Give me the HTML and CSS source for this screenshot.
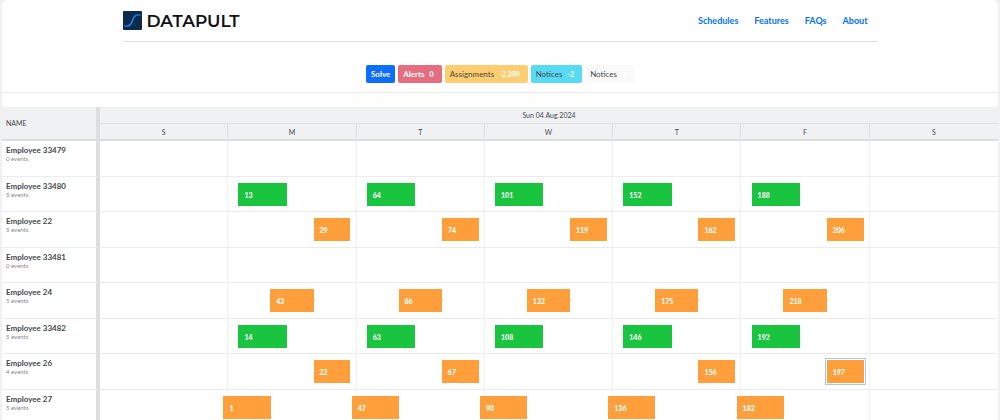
FILE: index.html
```html
<!DOCTYPE html>
<html lang="en">
<head>
<meta charset="utf-8">
<title>Datapult</title>
<link rel="stylesheet" href="styles.css">
</head>
<body>
<div class="page">
  <header class="site-header">
    <a class="brand" href="#">
      <svg class="brand-mark" viewBox="0 0 19 19" aria-hidden="true">
        <rect width="19" height="19" rx="1" fill="#0b2a4c"/>
        <path d="M1.500 14.800C6 16 8 13.800 9.200 10C10.400 5.800 12 3.600 17.500 4" fill="none" stroke="#1583e6" stroke-width="1.200" stroke-linecap="round"/>
        <path d="M5 15.200C7.400 14.400 8.600 12.400 9.400 9.800C10.100 7.200 11 5.400 12.800 4.300" fill="none" stroke="#1c7fe6" stroke-width="1.300"/>
        <circle cx="12.500" cy="14.500" r=".4" fill="#2b5f96"/>
        <circle cx="6" cy="5" r=".3" fill="#2b5f96"/>
      </svg>
      <span class="brand-name">DATAPULT</span>
    </a>
    <nav class="site-nav">
      <a href="#">Schedules</a>
      <a href="#">Features</a>
      <a href="#">FAQs</a>
      <a href="#">About</a>
    </nav>
  </header>

  <div class="toolbar">
    <button class="btn solve">Solve</button>
    <button class="btn alerts">Alerts <span class="count">0</span></button>
    <button class="btn assignments">Assignments <span class="count">-2.390</span></button>
    <button class="btn info">Notices <span class="count">-2</span></button>
    <button class="btn light">Notices <span class="count">0</span></button>
  </div>

  <table class="scheduler">
    <thead>
      <tr class="date-row"><th class="name-head" rowspan="2">NAME</th><th colspan="7">Sun 04 Aug 2024</th></tr>
      <tr class="day-row"><th>S</th><th>M</th><th>T</th><th>W</th><th>T</th><th>F</th><th>S</th></tr>
    </thead>
    <tbody>
      <tr><th>Employee 33479<small>0 events</small></th><td></td><td></td><td></td><td></td><td></td><td></td><td></td></tr>
      <tr><th>Employee 33480<small>5 events</small></th><td></td><td><div class="event early">13</div></td><td><div class="event early">64</div></td><td><div class="event early">101</div></td><td><div class="event early">152</div></td><td><div class="event early">188</div></td><td></td></tr>
      <tr><th>Employee 22<small>5 events</small></th><td></td><td><div class="event late">29</div></td><td><div class="event late">74</div></td><td><div class="event late">119</div></td><td><div class="event late">162</div></td><td><div class="event late">206</div></td><td></td></tr>
      <tr><th>Employee 33481<small>0 events</small></th><td></td><td></td><td></td><td></td><td></td><td></td><td></td></tr>
      <tr><th>Employee 24<small>5 events</small></th><td></td><td><div class="event day">43</div></td><td><div class="event day">86</div></td><td><div class="event day">132</div></td><td><div class="event day">175</div></td><td><div class="event day">218</div></td><td></td></tr>
      <tr><th>Employee 33482<small>5 events</small></th><td></td><td><div class="event early">14</div></td><td><div class="event early">63</div></td><td><div class="event early">108</div></td><td><div class="event early">146</div></td><td><div class="event early">192</div></td><td></td></tr>
      <tr><th>Employee 26<small>4 events</small></th><td></td><td><div class="event late">22</div></td><td><div class="event late">67</div></td><td></td><td><div class="event late">156</div></td><td><div class="event late selected">197</div></td><td></td></tr>
      <tr><th>Employee 27<small>5 events</small></th><td><div class="event night">1</div></td><td><div class="event night">47</div></td><td><div class="event night">90</div></td><td><div class="event night">136</div></td><td><div class="event night">182</div></td><td></td><td></td></tr>
    </tbody>
  </table>
</div>
</body>
</html>
```
FILE: styles.css
```css
* { box-sizing: border-box; }

body {
  margin: 0;
  height: 100vh;
  overflow: hidden;
  background: #f1f1f2;
  color: #44484c;
  font-family: "Gill Sans", Lato, "Open Sans", sans-serif;
}

.page {
  margin: 0 2px;
  min-height: 100vh;
  background: #fff;
  border-radius: 5px 5px 0 0;
}

.site-header {
  display: flex;
  align-items: center;
  justify-content: space-between;
  max-width: 755px;
  height: 42px;
  margin: 0 auto;
  padding-right: 10px;
  border-bottom: 1px solid #dfe0e2;
}

.brand {
  display: flex;
  align-items: center;
  gap: 5px;
  color: #101214;
  text-decoration: none;
}

.brand-mark { width: 19px; height: 19px; }

.brand-name {
  font-family: Montserrat, Lato, sans-serif;
  font-size: 17px;
  font-weight: 600;
  line-height: 20px;
}

.site-nav { display: flex; gap: 16px; }

.site-nav a {
  color: #0070ff;
  font-size: 9px;
  font-weight: 700;
  line-height: 12px;
  text-decoration: none;
}

.toolbar {
  display: flex;
  justify-content: center;
  gap: 3px;
  padding: 23px 0 9px;
  border-bottom: 1px solid #e8e9ea;
}

.btn {
  display: flex;
  align-items: center;
  gap: 5px;
  height: 18px;
  padding: 0 5px;
  border: 0;
  border-radius: 2px;
  color: #44484c;
  font-family: inherit;
  font-size: 8px;
  white-space: nowrap;
}

.count {
  padding-right: 3px;
  color: #fff;
  font-size: 7px;
  font-weight: 900;
}

.solve { background: #0d6efd; color: #fff; font-weight: 700; }
.alerts { background: #e66d80; color: #fff; font-weight: 700; }
.assignments { background: #ffcd70; }
.info { background: #57daf3; }
.light { background: #fafafa; }

.scheduler {
  width: 100%;
  margin-top: 14px;
  table-layout: fixed;
  border-collapse: separate;
  border-spacing: 0;
}

.scheduler th, .scheduler td { padding: 0; }

.scheduler thead th {
  background: #f0f1f3;
  color: #44484e;
  font-size: 7px;
  font-weight: 400;
  line-height: 10px;
}

.date-row { height: 17px; }
.day-row { height: 17px; }

.date-row th { border-bottom: 1px solid #dedfe2; }

.scheduler .name-head {
  width: 98px;
  padding-left: 4px;
  border-right: 4px solid #dedee1;
  border-bottom: 2px solid #dcdde0;
  text-align: left;
}

.day-row th {
  border-right: 1px solid #dcdde0;
  border-bottom: 2px solid #dcdde0;
}

.scheduler tbody tr { height: 36px; }
.scheduler tbody tr:nth-child(even) { height: 35px; }

.scheduler tbody th {
  padding: 4px 0 0 4px;
  border-right: 4px solid #dedee1;
  border-bottom: 1px solid #ebecee;
  font-size: 8px;
  font-weight: 700;
  line-height: 10px;
  text-align: left;
  vertical-align: top;
}

.scheduler small {
  display: block;
  color: #85898d;
  font-size: 6px;
  font-weight: 400;
  line-height: 8px;
}

.scheduler td {
  position: relative;
  border-right: 1px solid #f2f3f4;
  border-bottom: 1px solid #ebecee;
}

.day-row th:last-child, .scheduler td:last-child { border-right: 0; }

.event {
  position: absolute;
  z-index: 1;
  top: 6px;
  height: 23px;
  padding-left: 6px;
  background: #ff9f3c;
  color: #fff;
  font-size: 7px;
  font-weight: 900;
  line-height: 24px;
}

.early { left: 8%; width: 38%; background: #19c43e; }
.late { left: 67%; width: 29%; }
.day { left: 33%; width: 34%; }
.night { left: 97%; width: 37%; }

.selected { outline: 1px solid #a9c8f5; outline-offset: 1px; }
```
